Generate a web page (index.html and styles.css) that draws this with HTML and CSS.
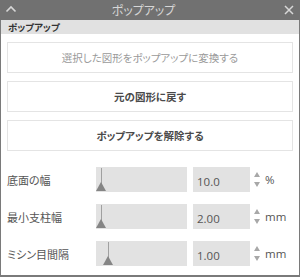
FILE: index.html
```html
<!DOCTYPE html>
<html lang="ja">
<head>
<meta charset="utf-8">
<link rel="stylesheet" href="styles.css">
</head>
<body>
<div class="window">
  <div class="titlebar">
    <svg class="caret" width="12" height="8" viewBox="0 0 12 8"><path d="M1.5 6.5 L6 2 L10.5 6.5" fill="none" stroke="#d8d8d8" stroke-width="1.6"/></svg>
    <div class="title">ポップアップ</div>
    <svg class="close" width="10" height="10" viewBox="0 0 10 10"><path d="M1 1 L9 9 M9 1 L1 9" fill="none" stroke="#d8d8d8" stroke-width="1.5"/></svg>
  </div>
  <div class="section">ポップアップ</div>
  <div class="body">
    <div class="btn disabled">選択した図形をポップアップに変換する</div>
    <div class="btn">元の図形に戻す</div>
    <div class="btn">ポップアップを解除する</div>
    <div class="rows">
      <div class="row">
        <div class="label">底面の幅</div>
        <div class="track"><div class="thumb" style="left:0px"></div></div>
        <div class="num">10.0</div>
        <div class="spin"><span class="up"></span><span class="down"></span></div>
        <div class="unit">%</div>
      </div>
      <div class="row">
        <div class="label">最小支柱幅</div>
        <div class="track"><div class="thumb" style="left:0px"></div></div>
        <div class="num">2.00</div>
        <div class="spin"><span class="up"></span><span class="down"></span></div>
        <div class="unit">mm</div>
      </div>
      <div class="row">
        <div class="label">ミシン目間隔</div>
        <div class="track"><div class="thumb" style="left:7px"></div></div>
        <div class="num">1.00</div>
        <div class="spin"><span class="up"></span><span class="down"></span></div>
        <div class="unit">mm</div>
      </div>
    </div>
  </div>
</div>
</body>
</html>
```

FILE: styles.css
```css
* { box-sizing: border-box; }
html, body { margin: 0; padding: 0; background: #fff; }
body {
  font-family: "Noto Sans CJK JP", "Noto Sans", sans-serif;
  font-feature-settings: "palt";
}

.window {
  width: 300px;
  height: 277px;
  border-left: 1px solid #7a7a7a;
  border-right: 1px solid #7a7a7a;
  border-bottom: 2px solid #7a7a7a;
  background: #fff;
  display: flex;
  flex-direction: column;
}

.titlebar {
  height: 20px;
  background: #717171;
  display: flex;
  align-items: center;
  padding: 0 6px 0 5px;
  margin: 0 -1px;
}
.title {
  flex: 1;
  text-align: center;
  color: #d6d6d6;
  font-size: 12px;
  line-height: 20px;
  padding-right: 14px;
}
.caret { margin-top: -2px; }

.section {
  height: 14px;
  background: #e1e1e1;
  font-size: 9.5px;
  font-weight: bold;
  color: #333;
  line-height: 14px;
  padding-left: 7px;
}

.body {
  padding: 8px 6px 0 6px;
  display: flex;
  flex-direction: column;
}

.btn {
  height: 31px;
  border: 1px solid #e4e4e4;
  margin-bottom: 8px;
  display: flex;
  align-items: center;
  justify-content: center;
  font-size: 10.5px;
  font-weight: bold;
  color: #4a4a4a;
}
.btn.disabled { color: #9a9a9a; font-weight: normal; }

.rows {
  margin-top: 8px;
  display: flex;
  flex-direction: column;
  gap: 12px;
}
.row {
  height: 25px;
  display: flex;
  align-items: center;
}
.label {
  width: 89px;
  font-size: 11px;
  color: #555;
}
.track {
  position: relative;
  width: 91px;
  height: 25px;
  background: #e2e2e2;
}
.thumb {
  position: absolute;
  bottom: 0;
  width: 11px;
  height: 25px;
}
.thumb::before {
  content: "";
  position: absolute;
  left: 5px;
  top: 1px;
  width: 1px;
  height: 20px;
  background: #a0a0a0;
}
.thumb::after {
  content: "";
  position: absolute;
  left: 0;
  bottom: 1px;
  border-left: 5.5px solid transparent;
  border-right: 5.5px solid transparent;
  border-bottom: 9px solid #858585;
}
.num {
  margin-left: 6px;
  width: 57px;
  height: 25px;
  background: #e2e2e2;
  font-family: "Open Sans", "Noto Sans", sans-serif;
  font-size: 11.5px;
  color: #555;
  line-height: 25px;
  padding-left: 4px;
  padding-top: 2px;
}
.spin {
  width: 14px;
  height: 25px;
  display: flex;
  flex-direction: column;
  justify-content: center;
  align-items: center;
  gap: 5px;
}
.spin .up {
  border-left: 3.5px solid transparent;
  border-right: 3.5px solid transparent;
  border-bottom: 5px solid #a8a8a8;
}
.spin .down {
  border-left: 3.5px solid transparent;
  border-right: 3.5px solid transparent;
  border-top: 5px solid #a8a8a8;
}
.unit {
  margin-left: 1px;
  font-family: "Open Sans", "Noto Sans", sans-serif;
  font-size: 11.5px;
  color: #555;
}
```
